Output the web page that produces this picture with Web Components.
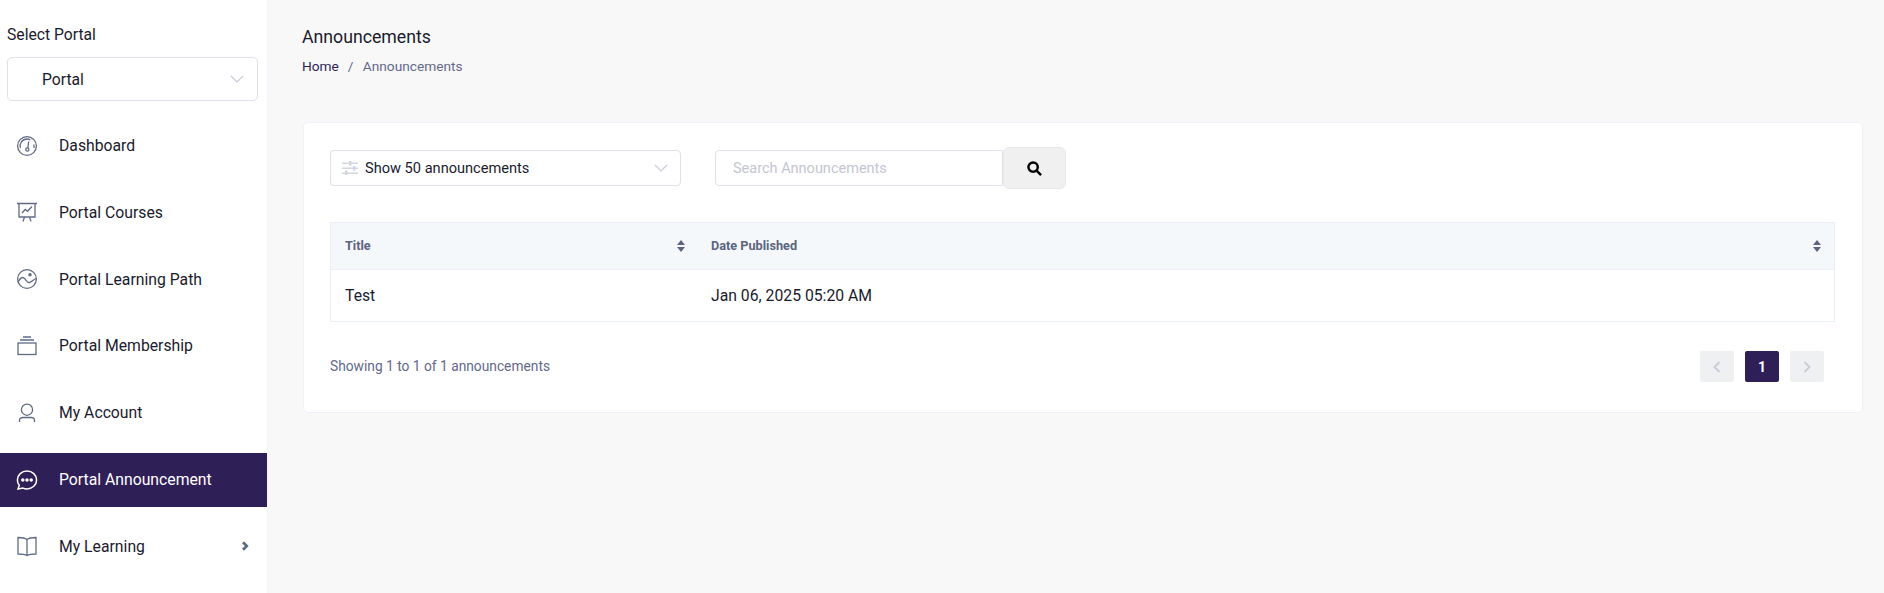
<!DOCTYPE html>
<html>
<head>
<meta charset="utf-8">
<title>Announcements</title>
<style>
  html, body { margin: 0; height: 100%; }
  body { font-family: Roboto, "Liberation Sans", sans-serif; background: #f8f8f8; color: #1a1a2e; }
</style>
</head>
<body>
<app-shell>
  <portal-sidebar slot="side">
    <nav-item label="Dashboard" icon="gauge"></nav-item>
    <nav-item label="Portal Courses" icon="board"></nav-item>
    <nav-item label="Portal Learning Path" icon="path"></nav-item>
    <nav-item label="Portal Membership" icon="stack"></nav-item>
    <nav-item label="My Account" icon="user"></nav-item>
    <nav-item label="Portal Announcement" icon="chat" active></nav-item>
    <nav-item label="My Learning" icon="book" more></nav-item>
  </portal-sidebar>
  <page-header title-text="Announcements"></page-header>
  <announcement-card></announcement-card>
</app-shell>

<script>
const ICONS = {
  gauge: '<circle cx="12" cy="12" r="9.4"/><path d="M5.4 14a7 7 0 0 1 6.600-9c1.200 0 2.300.3 3.300.8"/><path d="M18.700 10.500a7 7 0 0 1 .2 3.500"/><path d="M13.700 7.500 12.800 14"/><circle cx="12.300" cy="15.500" r="1.600"/>',
  board: '<path d="M2 3.500h20M4 3.500v13.500h16V3.500M8 21.500l1.500-4.500M16 21.500 14.500 17"/><path d="M7 13l3.200-3.500 2.300 1.800 4.500-4.800"/>',
  path: '<circle cx="12" cy="12" r="9.400"/><path d="M3 15c2-3.500 4-5.500 6-4s3 5 5.500 4.500 3.500-3 6.800-4"/><circle cx="15" cy="7.800" r="1.100" fill="currentColor"/>',
  stack: '<rect x="3" y="9" width="18" height="11.500"/><path d="M5 6h14M8 3h8"/>',
  user: '<circle cx="12" cy="8.700" r="5.600"/><path d="M4.500 21v-1.500c0-1.800 1.500-3 3.500-3h8c2 0 3.500 1.200 3.500 3V21"/>',
  chat: '<path d="M12 3c-5.300 0-9.600 4-9.600 8.900 0 2 .7 3.800 1.900 5.300l-1.300 3.800 5-.9c1.300.6 2.500.8 4 .8 5.300 0 9.600-4 9.600-9S17.300 3 12 3z"/><circle cx="7.800" cy="12" r="1" fill="currentColor"/><circle cx="12" cy="12" r="1" fill="currentColor"/><circle cx="16.200" cy="12" r="1" fill="currentColor"/>',
  book: '<path d="M12 5.500C10 4 6.500 3.500 3 3.500V20c3.500 0 7 .3 9 1.500 2-1.200 5.500-1.500 9-1.500V3.500C17.500 3.500 14 4 12 5.500zM12 5.500v16"/>'
};

class AppShell extends HTMLElement {
  constructor() {
    super();
    this.attachShadow({ mode: 'open' });
    this.shadowRoot.innerHTML = `
      <style>
        :host { display: flex; height: 593px; overflow: hidden; }
        .side { flex: 0 0 268px; }
        main { flex: 1; min-width: 0; padding: 27px 21px 0 35px; box-sizing: border-box; }
      </style>
      <div class="side"><slot name="side"></slot></div>
      <main><slot></slot></main>
    `;
  }
}
customElements.define('app-shell', AppShell);

class PortalSidebar extends HTMLElement {
  constructor() {
    super();
    this.attachShadow({ mode: 'open' });
    this.shadowRoot.innerHTML = `
      <style>
        :host { display: block; height: 593px; box-sizing: border-box; background: #fff; border-right: 1px solid #f1f4f9; padding-top: 26px; }
        .label { font-size: 15.700px; line-height: 18px; padding-left: 7px; color: #1a1a2e; }
        .select { margin: 13px 9px 17.600px 7px; height: 44px; box-sizing: border-box; border: 1px solid #dfe1e9; border-radius: 5px; display: flex; align-items: center; justify-content: space-between; padding: 0 13px 0 34px; font-size: 15.700px; color: #1a1a2e; }
        svg { width: 14px; height: 8px; fill: none; stroke: #c9ccd8; stroke-width: 1.200; }
        nav { display: flex; flex-direction: column; gap: 12.800px; }
      </style>
      <div class="label">Select Portal</div>
      <div class="select"><span>Portal</span><svg viewBox="0 0 14 8"><path d="M1 1l6 6 6-6"/></svg></div>
      <nav><slot></slot></nav>
    `;
  }
}
customElements.define('portal-sidebar', PortalSidebar);

class NavItem extends HTMLElement {
  constructor() {
    super();
    this.attachShadow({ mode: 'open' });
    const icon = ICONS[this.getAttribute('icon')] || '';
    const more = this.hasAttribute('more')
      ? '<svg class="more" viewBox="0 0 8 10"><path d="M2 1.200 5.800 5 2 8.800"/></svg>' : '';
    this.shadowRoot.innerHTML = `
      <style>
        :host { display: flex; align-items: center; height: 54px; padding: 0 18px 0 15px; font-size: 15.750px; color: #1a1a2e; }
        :host([active]) { background: #2f1f57; color: #fff; }
        .icon { width: 24px; height: 24px; margin-right: 20px; flex: none; color: #5f6b85; fill: none; stroke: currentColor; stroke-width: 1.300; }
        :host([active]) .icon { color: #fff; stroke-width: 1.500; }
        span { flex: 1; }
        .more { width: 8px; height: 10px; fill: none; stroke: #5f6b85; stroke-width: 2.700; }
      </style>
      <svg class="icon" viewBox="0 0 24 24">${icon}</svg>
      <span>${this.getAttribute('label')}</span>
      ${more}
    `;
  }
}
customElements.define('nav-item', NavItem);

class PageHeader extends HTMLElement {
  constructor() {
    super();
    this.attachShadow({ mode: 'open' });
    this.shadowRoot.innerHTML = `
      <style>
        :host { display: block; margin-left: -1px; }
        h1 { margin: 0; font-size: 17.700px; font-weight: 400; line-height: 20px; color: #1a1a2e; }
        .crumbs { margin-top: 10px; font-size: 13.700px; line-height: 18px; color: #64688a; }
        .home { color: #2f1f57; }
        .sep { margin: 0 6px 0 5.500px; }
      </style>
      <h1>${this.getAttribute('title-text')}</h1>
      <div class="crumbs"><span class="home">Home</span><span class="sep"> / </span>Announcements</div>
    `;
  }
}
customElements.define('page-header', PageHeader);

class AnnouncementCard extends HTMLElement {
  constructor() {
    super();
    this.attachShadow({ mode: 'open' });
    this.shadowRoot.innerHTML = `
      <style>
        :host { display: block; margin-top: 47px; height: 291px; box-sizing: border-box; background: #fff; border: 1px solid #edf2f9; border-radius: 5px; padding: 24px 27px 0 26px; }
        .tools { display: flex; align-items: center; height: 42px; }
        .filter { width: 351px; height: 36px; box-sizing: border-box; border: 1px solid #dfe1e9; border-radius: 4px; display: flex; align-items: center; padding: 0 12px 0 11px; font-size: 14.600px; color: #1a1a2e; }
        .filter .lines { width: 16px; height: 14px; margin-right: 7px; fill: #d3d6df; }
        .filter span { flex: 1; }
        .chev { width: 14px; height: 8px; fill: none; stroke: #c9ccd8; stroke-width: 1.200; }
        .search { margin-left: 34px; width: 288px; height: 36px; box-sizing: border-box; border: 1px solid #dfe1e9; border-radius: 4px 0 0 4px; display: flex; align-items: center; padding-left: 17px; font-size: 14.500px; color: #c3c6d2; }
        .go { width: 63px; height: 42px; box-sizing: border-box; background: #f0f0f0; border: 1px solid #e8e8e8; border-radius: 6px; display: flex; align-items: center; justify-content: center; }
        .go svg { width: 15px; height: 15px; margin-right: 1px; fill: none; stroke: #000; stroke-width: 2.600; }
        .grid { margin-top: 33px; border: 1px solid #e9f0f7; display: grid; grid-template-columns: 367px 1fr; }
        .th, .td { display: flex; align-items: center; padding: 0 13px; }
        .th { height: 46px; background: #f5f8fb; border-bottom: 1px solid #e9f0f7; font-size: 12.700px; font-weight: 700; color: #5c6480; justify-content: space-between; }
        .th b { font-weight: inherit; margin-bottom: 2px; }
        .td { height: 51px; font-size: 15.750px; color: #1a1a2e; }
        .th:first-child, .td.first { padding-left: 14px; }
        .th svg { width: 8px; height: 12px; fill: #5c6480; margin-bottom: 1px; }
        .foot { display: flex; align-items: center; justify-content: space-between; margin-top: 29px; padding-right: 11px; font-size: 13.770px; color: #64688a; }
        .foot > span { margin-bottom: 2px; }
        .pager { display: flex; gap: 11px; }
        .pg { width: 34px; height: 31px; border-radius: 2px; background: #eff0f2; display: flex; align-items: center; justify-content: center; }
        .pg svg { width: 8px; height: 12px; fill: none; stroke: #c9ccd8; stroke-width: 1.800; }
        .pg.on { background: #2f1f57; color: #fff; font-weight: 700; font-size: 14px; }
      </style>
      <div class="tools">
        <div class="filter">
          <svg class="lines" viewBox="0 0 16 14"><rect y="1.500" width="16" height="1.500"/><rect y="6.500" width="16" height="1.500"/><rect y="11.500" width="16" height="1.500"/><rect x="7" width="2.500" height="4.500"/><rect x="11" y="5" width="2.500" height="4.500"/><rect x="3" y="9.500" width="2.500" height="4.500"/></svg>
          <span>Show 50 announcements</span>
          <svg class="chev" viewBox="0 0 14 8"><path d="M1 1l6 6 6-6"/></svg>
        </div>
        <div class="search">Search Announcements</div>
        <div class="go"><svg viewBox="0 0 16 16"><circle cx="6.500" cy="6.500" r="5"/><path d="M10.200 10.200 15 15"/></svg></div>
      </div>
      <div class="grid">
        <div class="th"><b>Title</b><svg viewBox="0 0 8 12"><path d="M4 0l4 5H0zM4 12 0 7h8z"/></svg></div>
        <div class="th"><b>Date Published</b><svg viewBox="0 0 8 12"><path d="M4 0l4 5H0zM4 12 0 7h8z"/></svg></div>
        <div class="td first">Test</div>
        <div class="td">Jan 06, 2025 05:20 AM</div>
      </div>
      <div class="foot">
        <span>Showing 1 to 1 of 1 announcements</span>
        <div class="pager">
          <div class="pg"><svg viewBox="0 0 8 12"><path d="M6.500 1 1.500 6l5 5"/></svg></div>
          <div class="pg on">1</div>
          <div class="pg"><svg viewBox="0 0 8 12"><path d="M1.500 1l5 5-5 5"/></svg></div>
        </div>
      </div>
    `;
  }
}
customElements.define('announcement-card', AnnouncementCard);
</script>
</body>
</html>
